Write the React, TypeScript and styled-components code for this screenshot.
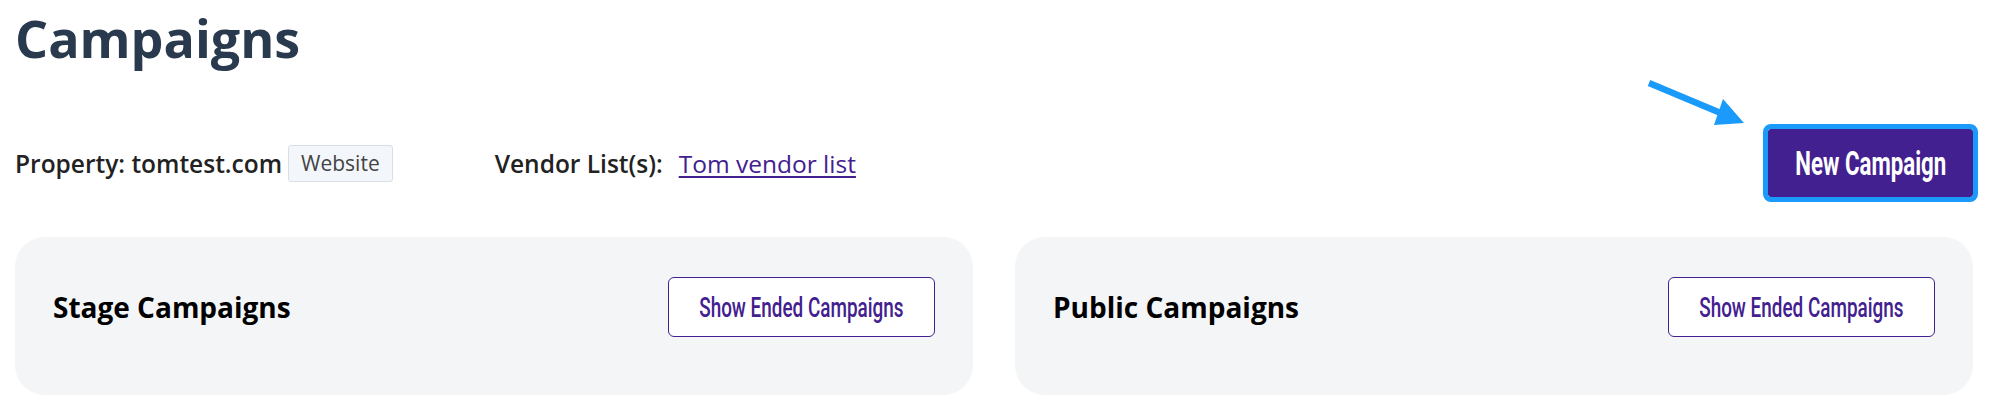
import React from 'react'
import styled, { createGlobalStyle } from 'styled-components'

const GlobalStyle = createGlobalStyle`
  body {
    margin: 0;
    background: #fff;
    font-family: "Open Sans", "Noto Sans", sans-serif;
  }
`

const CampaignCard: React.FC<{ title: string }> = ({ title }) => (
  <Card>
    <CardHead>
      <CardTitle>{title}</CardTitle>
      <OutlineButton>
        <Narrow>Show Ended Campaigns</Narrow>
      </OutlineButton>
    </CardHead>
  </Card>
)

export default function App() {
  return (
    <Page>
      <GlobalStyle />
      <Title>Campaigns</Title>
      <Toolbar>
        <Meta>
          <MetaItem>
            <Label>Property: tomtest.com</Label>
            <Badge>Website</Badge>
          </MetaItem>
          <MetaItem>
            <Label>Vendor List(s):</Label>
            <VendorLink href="#">Tom vendor list</VendorLink>
          </MetaItem>
        </Meta>
        <ButtonSpot>
          <Arrow width="110" height="56" viewBox="0 0 110 56">
            <line x1="6" y1="6" x2="80" y2="37" stroke="#1a9bfc" strokeWidth="6.5" />
            <polygon points="71,48 80,22 101,46" fill="#1a9bfc" />
          </Arrow>
          <PrimaryButton>
            <Narrow>New Campaign</Narrow>
          </PrimaryButton>
        </ButtonSpot>
      </Toolbar>
      <Cards>
        <CampaignCard title="Stage Campaigns" />
        <CampaignCard title="Public Campaigns" />
      </Cards>
    </Page>
  )
}

const Page = styled.div`
padding: 2px 16px 0 15px;
`
const Title = styled.h1`
margin: 0;
font-size: 52px;
line-height: 71px;
font-weight: 700;
color: #293a4f;
`
const Toolbar = styled.div`
display: flex;
align-items: center;
justify-content: space-between;
margin-top: 56px;
`
const Meta = styled.div`
display: flex;
align-items: center;
gap: 102px;
`
const MetaItem = styled.div`
display: flex;
align-items: center;
gap: 6px;
`
const Label = styled.span`
font-size: 24.5px;
font-weight: 600;
color: #222;
`
const Badge = styled.span`
display: inline-flex;
align-items: center;
height: 37px;
box-sizing: border-box;
padding: 0 12px;
font-size: 21px;
color: #444;
background: #f3f7fb;
border: 1px solid #d9dee4;
border-radius: 3px;
`
const VendorLink = styled.a`
font-size: 24.5px;
color: #43208f;
text-decoration: underline;
text-underline-offset: 3px;
margin-left: 10px;
`
const ButtonSpot = styled.div`
position: relative;
`
const Arrow = styled.svg`
position: absolute;
left: -125px;
top: -52px;
`
/* stand-in for a condensed display face */
const Narrow = styled.span`
display: inline-block;
transform: scaleX(0.675);
white-space: nowrap;
`
const PrimaryButton = styled.button`
display: flex;
align-items: center;
justify-content: center;
height: 68px;
width: 205px;
padding: 0;
background: #42208f;
color: #fff;
border: none;
border-radius: 3px;
outline: 5px solid #1a9bfc;
font-family: Roboto, "Liberation Sans", sans-serif;
font-weight: 700;
font-size: 33px;
cursor: pointer;
`
const Cards = styled.div`
display: grid;
grid-template-columns: 1fr 1fr;
gap: 42px;
margin-top: 40px;
`
const Card = styled.section`
box-sizing: border-box;
height: 158px;
padding: 40px 38px;
background: #f4f5f7;
border-radius: 30px;
`
const CardHead = styled.div`
display: flex;
align-items: center;
justify-content: space-between;
`
const CardTitle = styled.h2`
margin: 0;
font-size: 28px;
font-weight: 700;
color: #000;
`
const OutlineButton = styled.button`
display: flex;
align-items: center;
justify-content: center;
height: 60px;
width: 267px;
padding: 0;
background: #fff;
color: #42208f;
border: 1px solid #42208f;
border-radius: 6px;
font-family: Roboto, "Liberation Sans", sans-serif;
font-weight: 500;
font-size: 28px;
cursor: pointer;
`
